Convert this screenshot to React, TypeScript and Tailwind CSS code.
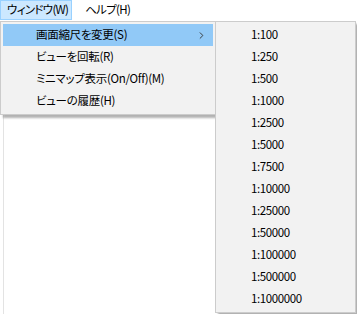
import { ChevronRight } from "lucide-react";

const mainItems = [
  { label: "画面縮尺を変更(S)", sub: true },
  { label: "ビューを回転(R)" },
  { label: "ミニマップ表示(On/Off)(M)" },
  { label: "ビューの履歴(H)" },
];

const scales = [
  "1:100",
  "1:250",
  "1:500",
  "1:1000",
  "1:2500",
  "1:5000",
  "1:7500",
  "1:10000",
  "1:25000",
  "1:50000",
  "1:100000",
  "1:500000",
  "1:1000000",
];

const font = "font-['Noto_Sans_CJK_JP',sans-serif] [font-feature-settings:'palt']";

export default function App() {
  return (
    <div
      className={`relative w-[357px] h-[314px] bg-white text-[11.5px] text-black overflow-hidden whitespace-nowrap ${font}`}
    >
      {/* Menu bar */}
      <div className="flex h-[20px] items-stretch tracking-[-0.7px]">
        <div className="flex items-center pl-[6px] pr-[3px] bg-[#cce8ff] border border-[#99d1ff]">
          ウィンドウ(W)
        </div>
        <div className="flex items-center pl-[13px]">ヘルプ(H)</div>
      </div>

      {/* faint window edge under the menu */}
      <div className="absolute left-[3px] top-[115px] bottom-0 border-l border-[#e3e3e3]" />

      {/* Main dropdown */}
      <div className="absolute left-0 top-[21px] w-[216px] bg-[#f2f2f2] border border-[#cccccc] p-[2px] shadow-[3px_3px_2px_rgba(0,0,0,0.3)]">
        {mainItems.map((item, i) => (
          <div
            key={item.label}
            className={`flex items-center h-[22px] pl-[33px] pr-[6px] ${
              i === 0 ? "bg-[#91c9f7]" : ""
            }`}
          >
            <span className="flex-1 leading-none tracking-[-0.3px]">{item.label}</span>
            {item.sub && (
              <ChevronRight size={11} strokeWidth={2} className="text-[#333]" />
            )}
          </div>
        ))}
      </div>

      {/* Scale submenu */}
      <div className="absolute left-[215px] top-[21px] w-[141px] bg-[#f2f2f2] border border-[#cccccc] p-[2px] shadow-[3px_3px_2px_rgba(0,0,0,0.3)]">
        {scales.map((s) => (
          <div key={s} className="flex items-center h-[22px] pl-[33px]">
            <span className="leading-none tracking-[-0.4px]">{s}</span>
          </div>
        ))}
      </div>
    </div>
  );
}
